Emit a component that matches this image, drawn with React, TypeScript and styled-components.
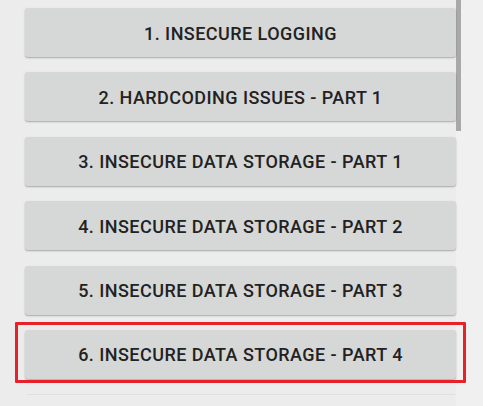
import React from "react";
import styled, { createGlobalStyle } from "styled-components";

const GlobalStyle = createGlobalStyle`
  html, body {
    margin: 0;
    padding: 0;
    background: #ececec;
    overflow: hidden;
  }
`;

const lessons = [
  "1. INSECURE LOGGING",
  "2. HARDCODING ISSUES - PART 1",
  "3. INSECURE DATA STORAGE - PART 1",
  "4. INSECURE DATA STORAGE - PART 2",
  "5. INSECURE DATA STORAGE - PART 3",
  "6. INSECURE DATA STORAGE - PART 4",
];

export default function App() {
  const highlighted = 5;

  return (
    <>
      <GlobalStyle />
      <Screen>
        <List>
          {lessons.map((label, index) => (
            <Item key={label}>
              <LessonButton>{label}</LessonButton>
              {index === highlighted && <Highlight />}
            </Item>
          ))}
          <Divider />
        </List>
        <Track>
          <Thumb />
        </Track>
      </Screen>
    </>
  );
}

const Screen = styled.div`
  display: grid;
  grid-template-columns: 1fr 27px;
  width: 483px;
  height: 406px;
  overflow: hidden;
`;

const List = styled.div`
  display: flex;
  flex-direction: column;
  gap: 15.4px;
  padding: 8px 0 0 25px;
`;

const Item = styled.div`
  position: relative;
`;

const LessonButton = styled.button`
  display: flex;
  align-items: center;
  justify-content: center;
  width: 100%;
  height: 49px;
  padding: 1px 0 0;
  border: none;
  border-radius: 3px;
  background: #d6d7d7;
  box-shadow: 0 1px 2px rgba(0, 0, 0, 0.22), 0 1px 1px rgba(0, 0, 0, 0.08);
  color: #222222;
  font-family: Roboto, "Noto Sans", sans-serif;
  font-weight: 500;
  font-size: 18px;
  letter-spacing: 0.45px;
`;

const Highlight = styled.div`
  position: absolute;
  top: -8px;
  left: -10px;
  right: -10px;
  bottom: -4px;
  border: 3px solid #e8202a;
  border-radius: 1px;
  pointer-events: none;
`;

const Divider = styled.div`
  height: 1px;
  margin: 0 1px 0 2px;
  background: #e0e0e0;
`;

const Track = styled.div`
  background: #f0f0f0;
`;

const Thumb = styled.div`
  width: 5px;
  height: 131px;
  background: #a9a9a9;
`;
